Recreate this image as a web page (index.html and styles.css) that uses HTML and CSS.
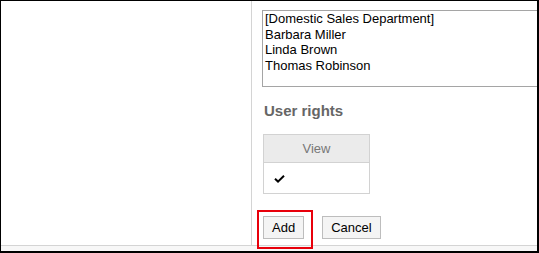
FILE: index.html
```html
<!DOCTYPE html>
<html lang="en">
<head>
  <meta charset="UTF-8">
  <title>User rights</title>
  <link rel="stylesheet" href="styles.css">
</head>
<body>

  <div class="frame">
    <div class="main">
      <div class="side"></div>

      <div class="content">
        <!-- selected users -->
        <div class="listbox">
          <div>[Domestic Sales Department]</div>
          <div>Barbara Miller</div>
          <div>Linda Brown</div>
          <div>Thomas Robinson</div>
        </div>

        <h3 class="section-title">User rights</h3>

        <table class="rights">
          <tr><th>View</th></tr>
          <tr>
            <td>
              <svg class="check" width="11" height="8" viewBox="0 0 11 8">
                <path d="M1 3.8 L4 6.6 L10 0.8" fill="none" stroke="#000" stroke-width="2"/>
              </svg>
            </td>
          </tr>
        </table>

        <div class="actions">
          <span class="highlight">
            <button class="btn">Add</button>
            <span class="mark"></span>
          </span>
          <button class="btn">Cancel</button>
        </div>
      </div>
    </div>
    <div class="strip"></div>
  </div>

</body>
</html>
```

FILE: styles.css
```css
body {
  margin: 0;
  font-family: 'Liberation Sans', Arial, sans-serif;
  background: #fff;
  color: #000;
}

.frame {
  width: 536px;
  height: 250px;
  border-top: 1px solid #000;
  border-left: 1px solid #000;
  border-right: 2px solid #000;
  border-bottom: 2px solid #000;
  overflow: hidden;
}

.main {
  display: flex;
  height: 244px;
  border-bottom: 1px solid #d4d4d4;
}

.side {
  width: 250px;
  flex-shrink: 0;
  border-right: 1px solid #d4d4d4;
}

.content {
  flex: 1;
  min-width: 0;
  padding: 9px 0 0 10px;
}

.listbox {
  width: 400px;
  height: 75px;
  border: 1px solid #a5a5a5;
  padding: 0 2px;
  font-size: 13px;
  line-height: 15.7px;
}

.section-title {
  margin: 15px 0 0 2px;
  font-size: 15px;
  line-height: 18px;
  font-weight: bold;
  color: #666;
}

.rights {
  margin: 14px 0 0 1px;
  border-collapse: collapse;
  width: 107px;
}

.rights th,
.rights td {
  border: 1px solid #d2d2d2;
  padding: 0;
}

.rights th {
  height: 27px;
  background: #ebebeb;
  color: #777;
  font-size: 13px;
  font-weight: normal;
  text-align: center;
}

.rights td {
  height: 30px;
  padding-left: 10px;
}

.check {
  display: block;
  margin-top: 1px;
}

.actions {
  display: flex;
  gap: 18px;
  margin: 22px 0 0 1px;
}

.highlight {
  position: relative;
  display: flex;
}

.btn {
  height: 23px;
  padding: 0 8px;
  border: 1px solid #bdbdbd;
  border-radius: 0;
  background: #f4f4f4;
  font-family: 'Liberation Sans', Arial, sans-serif;
  font-size: 13px;
  color: #000;
}

.mark {
  position: absolute;
  left: -6px;
  top: -6px;
  width: 52px;
  height: 35px;
  border: 2px solid #e8000b;
}

.strip {
  height: 5px;
  background: #f7f7f7;
}
```
